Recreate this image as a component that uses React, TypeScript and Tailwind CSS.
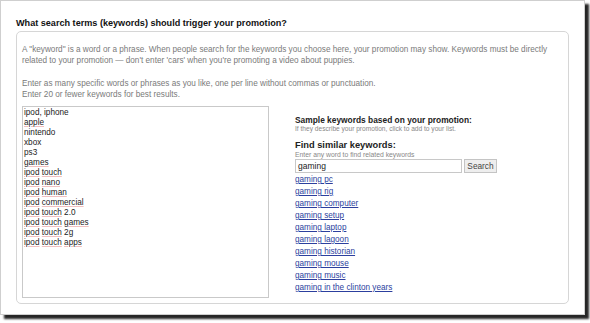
import React from 'react';

const keywords = [
  'ipod, iphone',
  'apple',
  'nintendo',
  'xbox',
  'ps3',
  'games',
  'ipod touch',
  'ipod nano',
  'ipod human',
  'ipod commercial',
  'ipod touch 2.0',
  'ipod touch games',
  'ipod touch 2g',
  'ipod touch apps',
];

const suggestions = [
  'gaming pc',
  'gaming rig',
  'gaming computer',
  'gaming setup',
  'gaming laptop',
  'gaming lagoon',
  'gaming historian',
  'gaming mouse',
  'gaming music',
  'gaming in the clinton years',
];

// words the spell checker flags in the list
const flagged = ['apple', 'games', 'ipod', 'touch', 'nano', 'human', 'commercial', 'apps'];

function KeywordLine({ text }: { text: string }) {
  const parts = text.split(' ');
  return (
    <div className="h-[10px] leading-[10px]">
      {parts.map((w, i) => (
        <span key={i}>
          <span
            className={
              flagged.includes(w)
                ? 'underline decoration-[#f0c0c0] decoration-1 underline-offset-[1px]'
                : ''
            }
          >
            {w}
          </span>
          {i < parts.length - 1 ? ' ' : ''}
        </span>
      ))}
    </div>
  );
}

export default function App() {
  return (
    <div className="w-[590px] h-[323px] bg-white font-['Liberation_Sans',Arial,sans-serif]">
      <div className="w-[585px] h-[315px] bg-white border border-[#cfcfcf] shadow-[4px_4px_2px_rgba(0,0,0,0.85)] px-[15px] pt-[16px]">
        {/* Heading */}
        <h2 className="text-[9.1px] font-bold text-[#111] leading-[12px]">
          What search terms (keywords) should trigger your promotion?
        </h2>

        {/* Box */}
        <div className="mt-[2px] h-[273px] border border-[#d6d6d6] rounded-[5px] px-[5px] pt-[12px]">
          <p className="text-[8.2px] leading-[11px] text-[#7a7a7a]">
            A "keyword" is a word or a phrase. When people search for the keywords you choose here, your promotion may show. Keywords must be directly
            <br />
            related to your promotion — don't enter 'cars' when you're promoting a video about puppies.
          </p>
          <p className="mt-[12px] text-[8.2px] leading-[11px] text-[#7a7a7a]">
            Enter as many specific words or phrases as you like, one per line without commas or punctuation.
            <br />
            Enter 20 or fewer keywords for best results.
          </p>

          <div className="flex mt-[6px]">
            {/* Keyword list */}
            <div className="w-[247px] h-[192px] border border-[#c9c9c9] px-[1px] pt-[1px] text-[8.2px] text-[#222]">
              {keywords.map(k => (
                <KeywordLine key={k} text={k} />
              ))}
            </div>

            {/* Right column */}
            <div className="ml-[26px] pt-[9px]">
              <div className="text-[8.4px] font-bold text-[#222] leading-[10px]">
                Sample keywords based on your promotion:
              </div>
              <div className="text-[6.6px] text-[#888] leading-[8px]">
                If they describe your promotion, click to add to your list.
              </div>

              <div className="mt-[7px] text-[9.3px] font-bold text-[#222] leading-[11px]">
                Find similar keywords:
              </div>
              <div className="text-[6.8px] text-[#888] leading-[8px]">
                Enter any word to find related keywords
              </div>

              <div className="flex items-center gap-[2px]">
                <div className="w-[167px] h-[14px] border border-[#c8c8c8] px-[2px] text-[8.5px] leading-[12px] text-[#222]">
                  gaming
                </div>
                <div className="w-[33px] h-[14px] border border-[#c4c4c4] bg-[#eeeeee] text-[8.3px] leading-[12px] text-[#444] text-center">
                  Search
                </div>
              </div>

              <div className="mt-[1px]">
                {suggestions.map(s => (
                  <div key={s} className="h-[12px] leading-[12px] text-[8.2px] text-[#2c3f9e] underline underline-offset-[1px]">
                    {s}
                  </div>
                ))}
              </div>
            </div>
          </div>
        </div>
      </div>
    </div>
  );
}
